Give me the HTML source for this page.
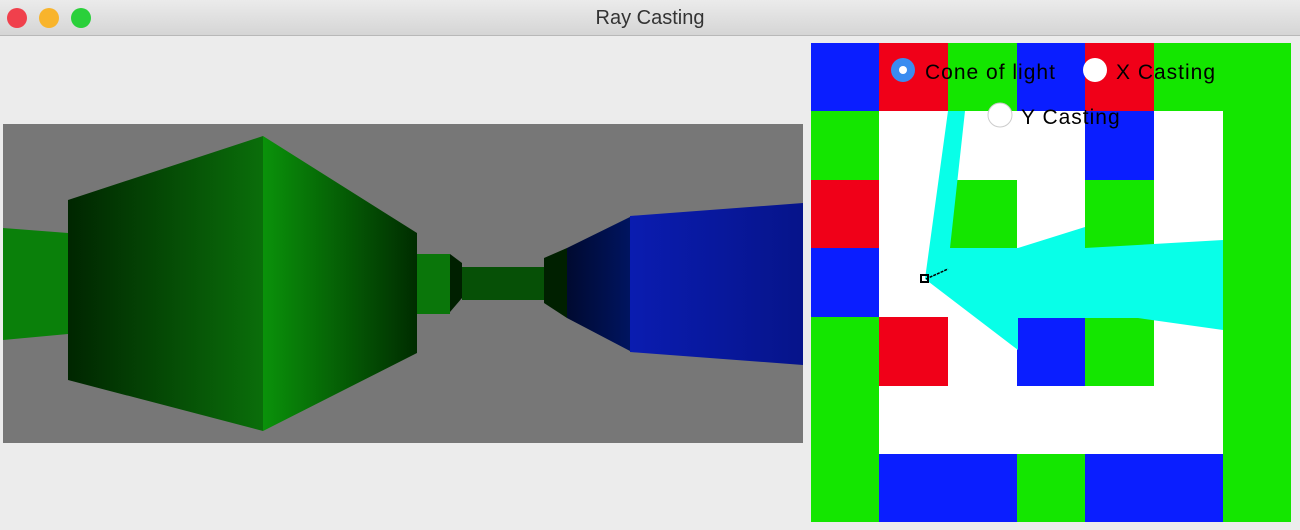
<!DOCTYPE html>
<html><head><style>
body{margin:0;width:1300px;height:530px;background:#ececec;overflow:hidden;font-family:"Liberation Sans",sans-serif;position:relative}
.tb{position:absolute;left:0;top:0;width:1300px;height:35px;background:linear-gradient(#ebebeb,#d5d5d5);border-bottom:1px solid #b8b8b8;text-align:center;font-size:20px;line-height:36px;color:#333}
.dot{position:absolute;top:8px;width:20px;height:20px;border-radius:50%}
</style></head><body>
<div class="tb">Ray Casting</div>
<div class="dot" style="left:7px;background:#f0404c"></div>
<div class="dot" style="left:39px;background:#f8b42c"></div>
<div class="dot" style="left:71px;background:#2ad03a"></div>
<svg width="1300" height="530" style="position:absolute;left:0;top:0">
<defs>
<linearGradient id="gl" x1="0" x2="1"><stop offset="0" stop-color="#002600"/><stop offset="1" stop-color="#0a6e0a"/></linearGradient>
<linearGradient id="gr" x1="0" x2="1"><stop offset="0" stop-color="#0a920a"/><stop offset="1" stop-color="#002c00"/></linearGradient>
<linearGradient id="gn" x1="0" x2="1"><stop offset="0" stop-color="#000a30"/><stop offset="1" stop-color="#001460"/></linearGradient>
<linearGradient id="gb" x1="0" x2="1"><stop offset="0" stop-color="#0a1cb0"/><stop offset="1" stop-color="#06148a"/></linearGradient>
</defs>
<rect x="3" y="124" width="800" height="319" fill="#777"/>
<polygon points="3,228 68,233 68,334 3,340" fill="#0a800a"/>
<polygon points="68,200 263,136 263,431 68,380" fill="url(#gl)"/>
<polygon points="263,136 417,233 417,353 263,431" fill="url(#gr)"/>
<polygon points="417,254 450,254 450,314 417,314" fill="#0a760a"/>
<polygon points="450,254 462,263 462,298 450,312" fill="#002000"/>
<rect x="462" y="267" width="83" height="33" fill="#065006"/>
<polygon points="544,258 567,248 567,318 544,303" fill="#002000"/>
<polygon points="567,248 630,217 630,351 567,318" fill="url(#gn)"/>
<polygon points="630,216 803,203 803,365 630,352" fill="url(#gb)"/>
<rect x="811" y="43" width="480" height="479" fill="#fff"/>
<rect x="811" y="43" width="68" height="68" fill="#0a1eff"/><rect x="879" y="43" width="69" height="68" fill="#f00018"/><rect x="948" y="43" width="69" height="68" fill="#14e600"/><rect x="1017" y="43" width="68" height="68" fill="#0a1eff"/><rect x="1085" y="43" width="69" height="68" fill="#f00018"/><rect x="1154" y="43" width="137" height="68" fill="#14e600"/>
<rect x="811" y="111" width="68" height="69" fill="#14e600"/><rect x="811" y="180" width="68" height="68" fill="#f00018"/><rect x="811" y="248" width="68" height="69" fill="#0a1eff"/><rect x="811" y="317" width="68" height="205" fill="#14e600"/>
<rect x="1223" y="111" width="68" height="411" fill="#14e600"/>
<rect x="1085" y="111" width="69" height="69" fill="#0a1eff"/>
<rect x="948" y="180" width="69" height="68" fill="#14e600"/><rect x="1085" y="180" width="69" height="68" fill="#14e600"/>
<rect x="879" y="317" width="69" height="69" fill="#f00018"/><rect x="1017" y="317" width="68" height="69" fill="#0a1eff"/><rect x="1085" y="317" width="69" height="69" fill="#14e600"/>
<rect x="879" y="454" width="138" height="68" fill="#0a1eff"/><rect x="1017" y="454" width="68" height="68" fill="#14e600"/><rect x="1085" y="454" width="138" height="68" fill="#0a1eff"/>
<polygon points="925,279 948,111 965,111 950,248 1018,248 1085,227 1085,248 1223,240 1223,330 1138,318 1018,318 1018,350" fill="#08ffe8"/>
<rect x="921" y="275" width="7" height="7" fill="none" stroke="#000" stroke-width="2"/>
<line x1="926" y1="279" x2="948" y2="269" stroke="#000" stroke-width="1.5" stroke-dasharray="3,1"/>
<circle cx="903" cy="70" r="12" fill="#3a8cf0"/><circle cx="903" cy="70" r="4" fill="#fff"/>
<circle cx="1095" cy="70" r="12" fill="#fff"/>
<circle cx="1000" cy="115" r="12" fill="#fff" stroke="#ccc"/>
<g font-family="Liberation Sans, sans-serif" font-size="21" letter-spacing="1" fill="#000">
<text x="925" y="79">Cone of light</text>
<text x="1116" y="79">X Casting</text>
<text x="1021" y="124">Y Casting</text>
</g>
</svg>
</body></html>
